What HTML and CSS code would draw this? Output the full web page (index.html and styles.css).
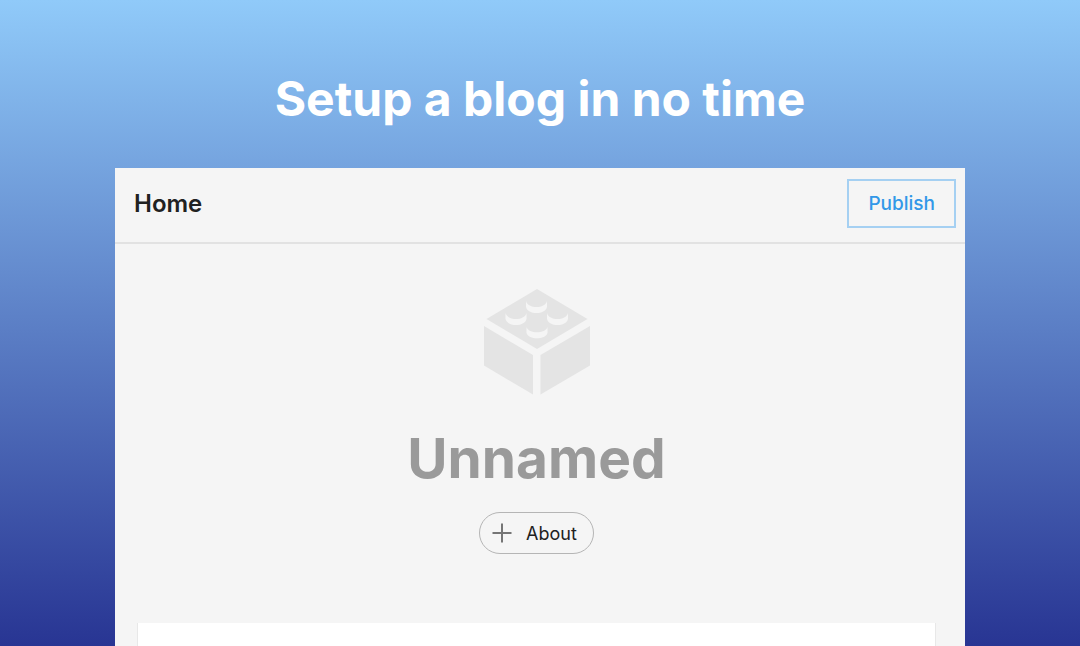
FILE: index.html
```html
<!DOCTYPE html>
<html lang="en">
<head>
<meta charset="utf-8">
<meta name="viewport" content="width=device-width, initial-scale=1">
<title>Setup a blog in no time</title>
<link rel="stylesheet" href="styles.css">
</head>
<body>
<main class="page">
  <h1 class="headline">Setup a blog in no time</h1>
  <section class="window">
    <header class="toolbar">
      <h2 class="toolbar-title">Home</h2>
      <button class="publish" type="button">Publish</button>
    </header>
    <div class="content">
      <svg class="brick" viewBox="0 0 108 108" aria-hidden="true">
        <path class="brick-body" d="M54 1L104.500 31L54 61L3.500 31Z"/>
        <path class="brick-body" d="M1 38L50 67V106.500L1 77.500Z"/>
        <path class="brick-body" d="M107 38L57.500 67V106.500L107 77.500Z"/>
        <path class="brick-stud" d="M43 13C45 21 62 21 64 13V19C62 27 45 27 43 19Z"/>
        <path class="brick-stud" d="M22.500 25C24.500 33 41.500 33 43.500 25V31C41.500 39 24.500 39 22.500 31Z"/>
        <path class="brick-stud" d="M64 25C66 33 83 33 85 25V31C83 39 66 39 64 31Z"/>
        <path class="brick-stud" d="M43.500 39C45.500 46 62.500 46 64.500 39V45C62.500 52 45.500 52 43.500 45Z"/>
      </svg>
      <h3 class="blog-name">Unnamed</h3>
      <button class="about" type="button">
        <svg class="plus" viewBox="0 0 20 20" aria-hidden="true"><path d="M10 .5V19.500M.5 10H19.500"/></svg>
        <span class="about-label">About</span>
      </button>
      <article class="post"></article>
    </div>
  </section>
</main>
</body>
</html>
```
FILE: styles.css
```css
* {
  box-sizing: border-box;
}

body {
  margin: 0;
  font-family: Inter, "Liberation Sans", sans-serif;
}

.page {
  display: flex;
  flex-direction: column;
  align-items: center;
  min-height: 100vh;
  padding: 70px 24px 0;
  background: linear-gradient(#90caf9, #283593);
}

.headline {
  margin: 0 0 40px;
  color: #fff;
  font-size: 48px;
  font-weight: 700;
  line-height: 58px;
  text-align: center;
}

.window {
  display: flex;
  flex: 1;
  flex-direction: column;
  width: 100%;
  max-width: 850px;
  background: #f5f5f5;
}

.toolbar {
  display: flex;
  align-items: center;
  justify-content: space-between;
  padding: 11px 9px 14px 19px;
  border-bottom: 2px solid #e2e2e2;
}

.toolbar-title {
  margin: 0;
  color: #212121;
  font-size: 24px;
  font-weight: 600;
  line-height: 32px;
}

.publish {
  padding: 10px 19px;
  border: 2px solid #a5d0f2;
  background: none;
  color: #3298e8;
  font: 500 19px/25px Inter, "Liberation Sans", sans-serif;
}

.content {
  display: flex;
  flex: 1;
  flex-direction: column;
  align-items: center;
  padding: 44px 29px 0 22px;
}

.brick {
  width: 108px;
  height: 108px;
}

.brick-body {
  fill: #e4e4e4;
}

.brick-stud {
  fill: #f5f5f5;
}

.blog-name {
  margin: 28px 0 20px;
  color: #9a9a9a;
  font-size: 55px;
  font-weight: 700;
  line-height: 68px;
}

.about {
  display: flex;
  align-items: center;
  gap: 14px;
  padding: 9px 16px 9px 12px;
  border: 1px solid #b5b5b5;
  border-radius: 24px;
  background: none;
  color: #212121;
  font: 400 18px/20px Inter, "Liberation Sans", sans-serif;
}

.about-label {
  padding-top: 2px;
}

.plus {
  width: 20px;
  height: 20px;
  fill: none;
  stroke: #757575;
  stroke-width: 2;
}

.post {
  flex: 1;
  align-self: stretch;
  margin-top: 69px;
  border: solid #e8e8e8;
  border-width: 0 1px;
  background: #fff;
}
```
